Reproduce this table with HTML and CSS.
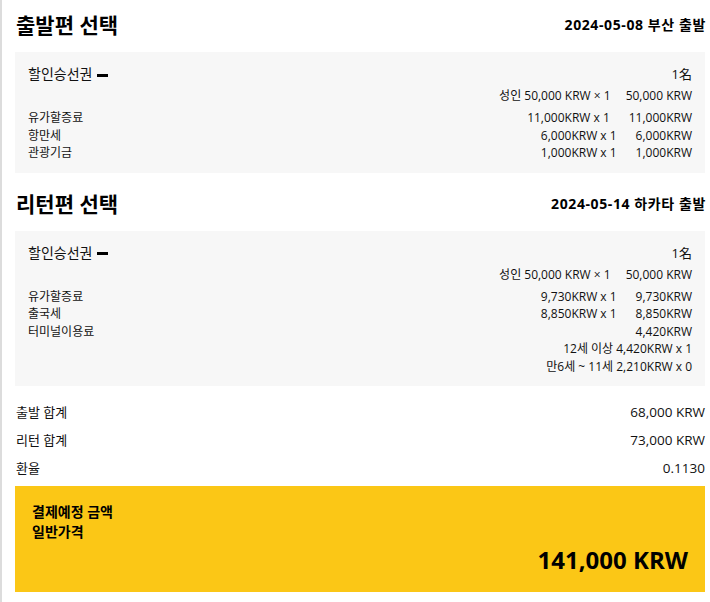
FILE: index.html
```html
<!DOCTYPE html>
<html>

<head lang="ko">
    <meta charset="UTF-8">
    <meta name="viewport" content="width=device-width, initial-scale=1.0">
    <title>결제 요약</title>
    <link rel="stylesheet" href="styles.css">
</head>

<body>
    <div class="wrap">
        <!-- 출발편 -->
        <div class="sec">
            <div class="sec-head">
                <h2>출발편 선택</h2>
                <span class="date">2024-05-08 부산 출발</span>
            </div>
            <div class="box">
                <div class="ticket">
                    <div class="t-name">할인승선권 <span class="toggle"></span></div>
                    <div class="t-info">
                        <p>1名</p>
                        <p>성인 50,000 KRW × 1<span class="amt">50,000 KRW</span></p>
                    </div>
                </div>
                <ul class="fees">
                    <li><span>유가할증료</span><span>11,000KRW x 1<em>11,000KRW</em></span></li>
                    <li><span>항만세</span><span>6,000KRW x 1<em>6,000KRW</em></span></li>
                    <li><span>관광기금</span><span>1,000KRW x 1<em>1,000KRW</em></span></li>
                </ul>
            </div>
        </div>

        <!-- 리턴편 -->
        <div class="sec">
            <div class="sec-head">
                <h2>리턴편 선택</h2>
                <span class="date">2024-05-14 하카타 출발</span>
            </div>
            <div class="box">
                <div class="ticket">
                    <div class="t-name">할인승선권 <span class="toggle"></span></div>
                    <div class="t-info">
                        <p>1名</p>
                        <p>성인 50,000 KRW × 1<span class="amt">50,000 KRW</span></p>
                    </div>
                </div>
                <ul class="fees">
                    <li><span>유가할증료</span><span>9,730KRW x 1<em>9,730KRW</em></span></li>
                    <li><span>출국세</span><span>8,850KRW x 1<em>8,850KRW</em></span></li>
                    <li><span>터미널이용료</span><span>4,420KRW</span></li>
                    <li class="sub"><span>12세 이상 4,420KRW x 1</span></li>
                    <li class="sub"><span>만6세 ~ 11세 2,210KRW x 0</span></li>
                </ul>
            </div>
        </div>

        <ul class="total">
            <li><span>출발 합계</span><span>68,000 KRW</span></li>
            <li><span>리턴 합계</span><span>73,000 KRW</span></li>
            <li><span>환율</span><span>0.1130</span></li>
        </ul>

        <div class="pay">
            <p>결제예정 금액</p>
            <p>일반가격</p>
            <div class="price">141,000 KRW</div>
        </div>
    </div>
</body>

</html>
```

FILE: styles.css
```css
* {
    margin: 0;
    padding: 0;
}

ul {
    list-style: none;
}

body {
    background-color: #fff;
    color: #111;
    font-family: "Open Sans", "Noto Sans CJK KR", sans-serif;
}

.wrap {
    width: 710px;
    height: 602px;
    box-sizing: border-box;
    border-left: 2px solid #dcdcdc;
    padding: 0 5px 0 13px;
}

.sec + .sec {
    margin-top: 6px;
}

.sec-head {
    display: flex;
    justify-content: space-between;
    align-items: center;
    height: 48px;
    padding-bottom: 4px;
}

.sec-head h2 {
    font-size: 21px;
    font-weight: bold;
    color: #000;
    padding-left: 1px;
}

.sec-head .date {
    font-size: 14px;
    font-weight: bold;
    letter-spacing: 0.6px;
    margin-right: -1px;
    color: #000;
}

.box {
    background-color: #f7f7f7;
    padding: 11px 13px 11px 13px;
}

.ticket {
    display: flex;
    justify-content: space-between;
    font-size: 14px;
    line-height: 22px;
}

.toggle {
    display: inline-block;
    width: 11px;
    height: 3px;
    background-color: #000;
    vertical-align: middle;
    margin-left: 1px;
}

.t-info {
    text-align: right;
    font-size: 12px;
}

.t-info p:first-child {
    font-size: 13px;
}

.amt {
    margin-left: 15px;
}

.fees {
    margin-top: 2px;
    font-size: 12px;
    line-height: 17.5px;
}

.fees li {
    display: flex;
    justify-content: space-between;
}

.fees li.sub {
    justify-content: flex-end;
}

.fees em {
    font-style: normal;
    margin-left: 19px;
}

.total {
    margin-top: 12px;
    font-size: 13px;
}

.total li {
    display: flex;
    justify-content: space-between;
    line-height: 28px;
    padding-left: 1px;
}

.total li span:last-child {
    font-size: 13.5px;
}

.pay {
    margin-top: 4px;
    background-color: #fbc716;
    padding: 16px 17px 17px 17px;
    font-size: 14px;
    font-weight: bold;
    line-height: 20px;
    color: #000;
}

.price {
    margin-top: 3px;
    text-align: right;
    font-size: 24px;
    line-height: 30px;
}
```
